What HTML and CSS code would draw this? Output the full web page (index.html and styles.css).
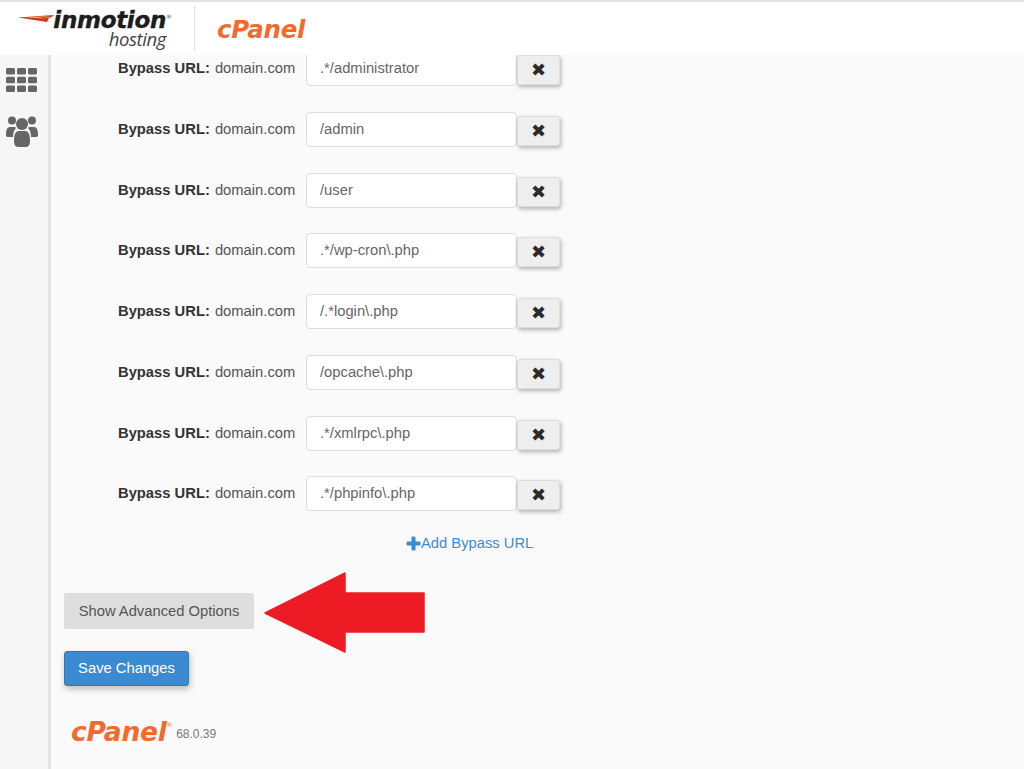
FILE: index.html
```html
<!DOCTYPE html>
<html lang="en">
<head>
<meta charset="utf-8">
<title>Bypass URLs</title>
<link rel="stylesheet" href="styles.css">
</head>
<body>
<header class="topbar">
  <div class="brand">
    <svg class="swoosh" width="36" height="8" viewBox="0 0 36 8"><path d="M0 2.500L36 0L33 2.500L17 3.500L31 3L29 7Z" fill="#c8381f"/><path d="M6 2.600L33 1L20 2.900Z" fill="#e8b26a"/></svg>
    <div class="brand-text">
      <span class="brand-name">inmotion<sup class="reg">®</sup></span>
      <span class="brand-sub">hosting</span>
    </div>
  </div>
  <span class="divider"></span>
  <span class="cpanel cpanel-top">cPanel</span>
</header>
<div class="shell">
  <nav class="sidebar">
    <svg class="icon-grid" width="31" height="24" viewBox="0 0 31 24">
      <g fill="#666">
        <rect x="0" y="0" width="9" height="6.5" rx="1.5"/><rect x="11" y="0" width="9" height="6.5" rx="1.5"/><rect x="22" y="0" width="9" height="6.5" rx="1.5"/>
        <rect x="0" y="8.700" width="9" height="6.5" rx="1.5"/><rect x="11" y="8.700" width="9" height="6.5" rx="1.5"/><rect x="22" y="8.700" width="9" height="6.5" rx="1.5"/>
        <rect x="0" y="17.400" width="9" height="6.5" rx="1.5"/><rect x="11" y="17.400" width="9" height="6.5" rx="1.5"/><rect x="22" y="17.400" width="9" height="6.5" rx="1.5"/>
      </g>
    </svg>
    <svg class="icon-users" width="32" height="31" viewBox="0 0 32 31">
      <g fill="#666">
        <circle cx="6" cy="4.500" r="4"/><circle cx="26" cy="4.500" r="4"/>
        <path d="M0 19c0-5 1-8 4-8h4c1 0 1.500.5 2 1-2 2-3 5-3 9H2c-1 0-2-.5-2-2z"/>
        <path d="M32 19c0-5-1-8-4-8h-4c-1 0-1.500.5-2 1 2 2 3 5 3 9h5c1 0 2-.5 2-2z"/>
        <circle cx="16" cy="8" r="6"/>
        <path d="M8 26c0-7 1-11 5-11h6c4 0 5 4 5 11 0 3-2 5-4 5h-8c-2 0-4-2-4-5z"/>
      </g>
    </svg>
  </nav>
  <main class="content">
    <div class="rows">
      <div class="row"><span class="label"><b>Bypass URL:</b> domain.com</span><input class="field" value=".*/administrator"><button class="remove">✖</button></div>
      <div class="row"><span class="label"><b>Bypass URL:</b> domain.com</span><input class="field" value="/admin"><button class="remove">✖</button></div>
      <div class="row"><span class="label"><b>Bypass URL:</b> domain.com</span><input class="field" value="/user"><button class="remove">✖</button></div>
      <div class="row"><span class="label"><b>Bypass URL:</b> domain.com</span><input class="field" value=".*/wp-cron\.php"><button class="remove">✖</button></div>
      <div class="row"><span class="label"><b>Bypass URL:</b> domain.com</span><input class="field" value="/.*login\.php"><button class="remove">✖</button></div>
      <div class="row"><span class="label"><b>Bypass URL:</b> domain.com</span><input class="field" value="/opcache\.php"><button class="remove">✖</button></div>
      <div class="row"><span class="label"><b>Bypass URL:</b> domain.com</span><input class="field" value=".*/xmlrpc\.php"><button class="remove">✖</button></div>
      <div class="row"><span class="label"><b>Bypass URL:</b> domain.com</span><input class="field" value=".*/phpinfo\.php"><button class="remove">✖</button></div>
    </div>
    <a class="add-link"><svg class="plus" width="15" height="15" viewBox="0 0 15 15"><path d="M5.500 1.500a1 1 0 0 1 1-1h2a1 1 0 0 1 1 1v4h4a1 1 0 0 1 1 1v2a1 1 0 0 1-1 1h-4v4a1 1 0 0 1-1 1h-2a1 1 0 0 1-1-1v-4h-4a1 1 0 0 1-1-1v-2a1 1 0 0 1 1-1h4z" fill="#3d8bcf"/></svg>Add Bypass URL</a>
    <div class="advanced-line">
      <button class="btn-advanced">Show Advanced Options</button>
      <svg class="arrow" width="162" height="82" viewBox="0 0 162 82"><path d="M2 41L82 1V21H161V60H82V80Z" fill="#ed1c24" stroke="#ed1c24" stroke-width="1.500" stroke-linejoin="round"/></svg>
    </div>
    <button class="btn-save">Save Changes</button>
    <footer class="foot">
      <span class="cpanel cpanel-foot">cPanel<sup class="tm">®</sup></span>
      <span class="version">68.0.39</span>
    </footer>
  </main>
</div>
</body>
</html>
```

FILE: styles.css
```css
* { box-sizing: border-box; }
html, body { margin: 0; height: 100%; overflow: hidden; }
body {
  width: 1024px;
  height: 769px;
  font-family: "Liberation Sans", Arial, sans-serif;
  font-size: 14.75px;
  color: #555;
  background: #fafafa;
  display: flex;
  flex-direction: column;
}
.topbar {
  flex: 0 0 55px;
  background: #fff;
  border-top: 2px solid #e2e2e2;
  display: flex;
  align-items: center;
  padding-left: 18px;
  position: relative;
  z-index: 2;
}
.brand { display: flex; align-items: flex-start; width: 158px; height: 47px; padding-top: 4px; }
.swoosh { margin-top: 6px; margin-right: -4px; flex: none; }
.brand-text { display: flex; flex-direction: column; align-items: flex-end; width: 122px; flex: none; }
.brand-name { font: italic 700 23px/22px "DejaVu Sans", sans-serif; color: #1c1c1c; letter-spacing: -.3px; -webkit-text-stroke: .4px #1c1c1c; white-space: nowrap; }
.reg { font-size: 6px; font-weight: 400; color: #555; vertical-align: 9px; line-height: 0; -webkit-text-stroke: 0; letter-spacing: 0; }
.brand-sub { font: italic 400 18.5px/20px "Open Sans", sans-serif; color: #444; margin-top: -2px; margin-right: 6px; letter-spacing: -.4px; }
.divider { width: 1px; height: 45px; background: #e0e0e0; margin-left: 18px; margin-right: 22px; }
.cpanel { font-family: "DejaVu Sans", sans-serif; font-style: italic; font-weight: 700; color: #f26a2e; letter-spacing: -.3px; }
.cpanel-top { font-size: 24.5px; margin-top: 2px; }
.shell { flex: 1; display: flex; min-height: 0; }
.sidebar {
  flex: 0 0 51px;
  background: #f6f6f6;
  border-right: 3px solid #e3e3e3;
  display: flex;
  flex-direction: column;
  align-items: flex-start;
  padding: 13px 0 0 6px;
  gap: 24px;
}
.content { flex: 1; min-width: 0; padding-left: 13px; overflow: hidden; }
.rows { margin-top: -4px; display: flex; flex-direction: column; gap: 25.75px; }
.row { display: flex; align-items: flex-start; height: 35px; padding-left: 54px; }
.label { width: 188px; flex: none; line-height: 34px; white-space: nowrap; }
.label b { color: #333; margin-right: 1px; }
.field {
  width: 211px;
  height: 35px;
  padding: 0 13px 1px;
  border: 1px solid #ddd;
  border-radius: 4px;
  background: #fff;
  font: inherit;
  color: #666;
  outline: none;
}
.remove {
  width: 43px;
  height: 30px;
  margin-top: 4px;
  padding: 0;
  border: 1px solid #ddd;
  border-radius: 3px;
  background: #eee;
  color: #2b2b2b;
  font-size: 18px;
  line-height: 28px;
  font-family: "DejaVu Sans", sans-serif;
  box-shadow: 1px 2px 4px rgba(0,0,0,.3);
}
.add-link {
  display: flex;
  align-items: center;
  width: 128px;
  margin: 21px 0 0 342px;
  color: #3d8bcf;
  line-height: 22px;
  white-space: nowrap;
}
.plus { flex: none; }
.advanced-line { display: flex; align-items: center; margin-top: 39px; height: 36px; position: relative; }
.btn-advanced {
  width: 190px;
  height: 36px;
  border: 0;
  border-radius: 2px;
  background: #dedede;
  color: #555;
  font: inherit;
  padding: 0 0 1px;
}
.arrow { position: absolute; left: 199px; top: -21px; }
.btn-save {
  display: block;
  width: 125px;
  height: 35px;
  margin-top: 22px;
  border: 1px solid #2f7abf;
  border-radius: 3px;
  background: #3a8bd2;
  color: #fff;
  font: inherit;
  padding: 0 0 1px;
  box-shadow: 1px 3px 6px rgba(0,0,0,.25);
}
.foot { display: flex; align-items: flex-end; margin: 30px 0 0 7px; }
.cpanel-foot { font-size: 26.5px; line-height: 32px; }
.tm { font-size: 6px; font-weight: 400; vertical-align: 14px; line-height: 0; }
.version { font-size: 12px; color: #777; margin: 0 0 7px 4px; }
```
